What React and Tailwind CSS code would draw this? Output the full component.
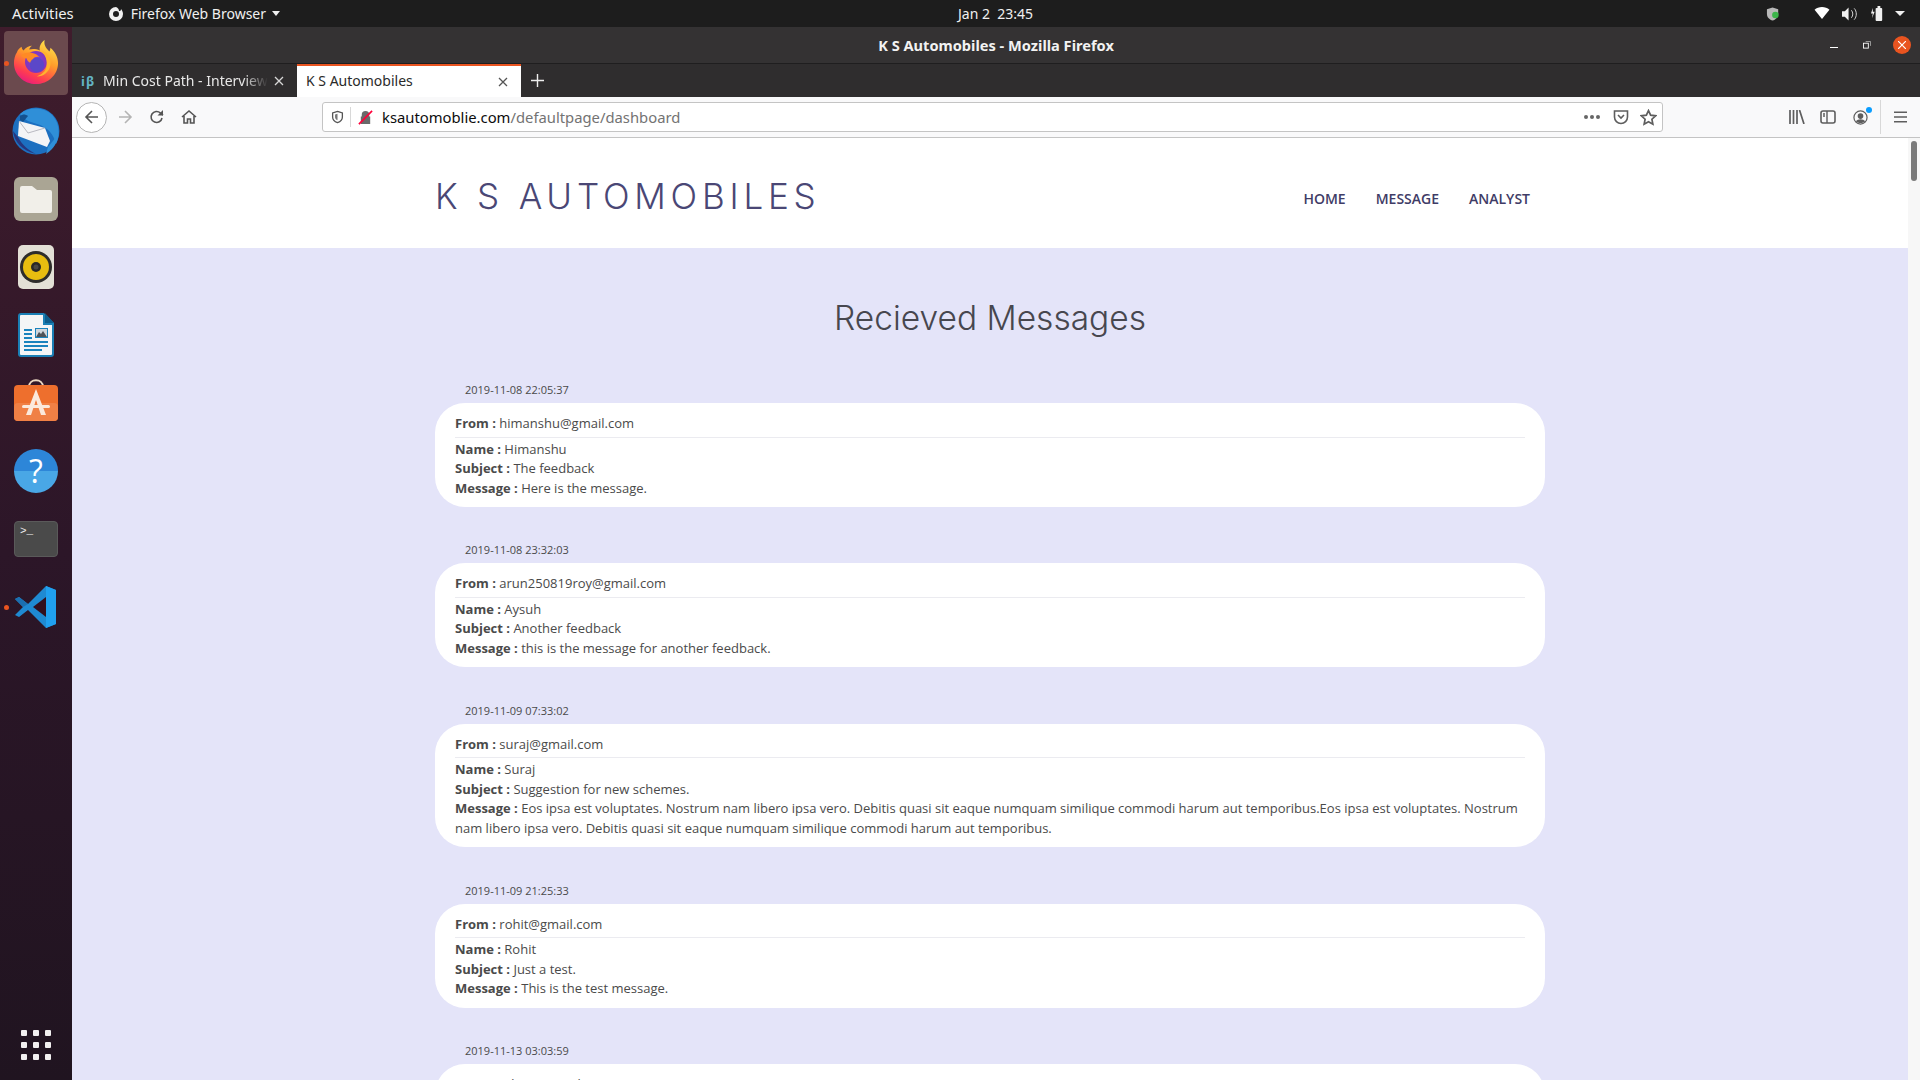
import React from "react";

const messages = [
  {
    date: "2019-11-08 22:05:37",
    from: "himanshu@gmail.com",
    name: "Himanshu",
    subject: "The feedback",
    message: "Here is the message.",
  },
  {
    date: "2019-11-08 23:32:03",
    from: "arun250819roy@gmail.com",
    name: "Aysuh",
    subject: "Another feedback",
    message: "this is the message for another feedback.",
  },
  {
    date: "2019-11-09 07:33:02",
    from: "suraj@gmail.com",
    name: "Suraj",
    subject: "Suggestion for new schemes.",
    message:
      "Eos ipsa est voluptates. Nostrum nam libero ipsa vero. Debitis quasi sit eaque numquam similique commodi harum aut temporibus.Eos ipsa est voluptates. Nostrum nam libero ipsa vero. Debitis quasi sit eaque numquam similique commodi harum aut temporibus.",
  },
  {
    date: "2019-11-09 21:25:33",
    from: "rohit@gmail.com",
    name: "Rohit",
    subject: "Just a test.",
    message: "This is the test message.",
  },
  {
    date: "2019-11-13 03:03:59",
    from: "aditya@gmail.com",
    name: "Aditya",
    subject: "",
    message: "",
  },
];

const FirefoxIcon = () => (
  <svg viewBox="0 0 48 48" className="w-[46px] h-[46px] -mt-[3px]">
    <defs>
      <linearGradient id="ffA" x1="0.7" y1="0" x2="0.2" y2="1">
        <stop offset="0" stopColor="#ffe14a" />
        <stop offset="0.4" stopColor="#ff9a2a" />
        <stop offset="0.75" stopColor="#ff3d50" />
        <stop offset="1" stopColor="#e31587" />
      </linearGradient>
      <radialGradient id="ffB" cx="0.5" cy="0.45" r="0.6">
        <stop offset="0" stopColor="#6e4ad6" />
        <stop offset="1" stopColor="#8a2fb8" />
      </radialGradient>
    </defs>
    <path
      d="M33 1c-1 5 1 8 5 12 1-2 1-3 1-4 5 4 8 10 8 16 0 12-10 22-23 22S1 37 1 25c0-4 1-8 3-11 1-3 3-5 5-6 0 2 1 3 2 4 2-3 6-5 9-5-2 1-3 3-3 4 3-1 7-1 11 1-1-4 1-8 5-11z"
      fill="url(#ffA)"
    />
    <circle cx="24" cy="24" r="11.5" fill="url(#ffB)" />
    <path d="M8 17c4-3 9-4 14-2 3 1 5 3 6 4-3-1-6 0-7 2-1 3 1 4 3 5-5 0-9-2-10-6-2 0-4-1-6-3z" fill="#ff8a25" />
    <path d="M30 12c6 2 10 8 9 15-1 7-7 12-14 12 5-2 9-5 10-10 1-6-1-12-5-17z" fill="#ffb32e" />
    <circle cx="25" cy="27" r="7.5" fill="#5b47c9" />
  </svg>
);

const ThunderbirdIcon = () => (
  <svg viewBox="0 0 48 48" className="w-[48px] h-[48px]">
    <circle cx="24" cy="24" r="23.500" fill="#1c6fc0" />
    <path d="M8 7c8-7 24-8 33 2 7 8 7 20 3 28-2-9-8-17-19-20-6-2-12-3-17-10z" fill="#2f8fd8" />
    <path d="M8 9c3-2 5-2 8 0l-5 6-3-2z" fill="#14518f" />
    <path d="M7 14 33 21l5 13-3 6-29-11z" fill="#f4f4f6" />
    <path d="M7 14 16 26 33 21" fill="none" stroke="#a9a9b4" strokeWidth="0.8" />
    <path d="M1 24c1 10 9 20 23 23-8-4-14-9-18-17z" fill="#27367e" />
    <path d="M36 40l9-11c0 6-2 12-11 18z" fill="#2f8fd8" />
  </svg>
);

const FilesIcon = () => (
  <div className="w-[44px] h-[44px] rounded-[6px] bg-[#aaa594] flex items-center justify-center">
    <svg viewBox="0 0 32 28" className="w-[32px] h-[28px]">
      <path d="M0 3a2 2 0 0 1 2-2h10l5 4h13a2 2 0 0 1 2 2v19a2 2 0 0 1-2 2H2a2 2 0 0 1-2-2z" fill="#f1efe9" />
    </svg>
  </div>
);

const RhythmboxIcon = () => (
  <div className="w-[36px] h-[44px] rounded-[5px] bg-[#e3e0d6] flex items-center justify-center -mt-[1px]">
    <svg viewBox="0 0 32 32" className="w-[32px] h-[32px]">
      <circle cx="16" cy="16" r="16" fill="#2e2d2b" />
      <circle cx="16" cy="16" r="13" fill="#e8bd10" />
      <circle cx="16" cy="16" r="5" fill="#2a2926" />
      <circle cx="16" cy="16" r="2.500" fill="#4a4844" />
    </svg>
  </div>
);

const WriterIcon = () => (
  <svg viewBox="0 0 36 44" className="w-[36px] h-[44px]">
    <path d="M3 0h23l10 10v31a3 3 0 0 1-3 3H3a3 3 0 0 1-3-3V3a3 3 0 0 1 3-3z" fill="#1a7fb5" />
    <path d="M3 2h22v10h9v29a1 1 0 0 1-1 1H3a1 1 0 0 1-1-1V3a1 1 0 0 1 1-1z" fill="#f4f5f6" />
    <path d="M27 0l9 10h-9z" fill="#0e5d8c" />
    <path d="M6 16h8v2H6zM6 20h8v2H6zM6 24h8v2H6zM6 28h24v2H6zM6 32h24v2H6zM6 36h18v2H6z" fill="#1a83bd" />
    <rect x="17" y="15" width="13" height="10" fill="#1a83bd" />
    <rect x="18" y="16" width="11" height="8" fill="#cfd6dc" />
    <path d="M18 24l3-5 2 2 2-3 4 6z" fill="#4f5358" />
  </svg>
);

const SoftwareIcon = () => (
  <svg viewBox="0 0 44 44" className="w-[44px] h-[44px] -mt-[4px]">
    <path d="M15 8c0-9 14-9 14 0" fill="none" stroke="#ecd9c3" strokeWidth="2" />
    <rect x="0" y="6" width="44" height="36" rx="4" fill="#ee6f2d" />
    <rect x="0" y="24" width="44" height="18" rx="4" fill="#f08045" />
    <path d="M22 10 12 36h5l5-15 5 15h5z" fill="#fbe9dc" />
    <rect x="8" y="26" width="28" height="3" rx="1.500" fill="#fbe9dc" />
  </svg>
);

const HelpIcon = () => (
  <div className="w-[44px] h-[44px] rounded-full bg-[linear-gradient(#2d86d8_50%,#49a7e6_50%)] flex items-center justify-center text-white text-[32px] leading-none font-['Open_Sans',sans-serif]">
    ?
  </div>
);

const TerminalIcon = () => (
  <div className="w-[44px] h-[36px] rounded-[4px] bg-[#4a4a4a] border border-[#5a5a5a] pl-[5px] pt-[2px] text-[#eee] text-[11px] leading-[14px] font-['Liberation_Mono',monospace]">
    &gt;_
  </div>
);

const VSCodeIcon = () => (
  <svg viewBox="0 0 44 44" className="w-[44px] h-[44px]">
    <path d="M32 1 14 19 5 12 1 14l8 8-8 8 4 2 9-7 18 18 10-4V5z" fill="#1f8ad2" />
    <path d="M32 1l10 4v34l-10 4V1z" fill="#20a0ef" />
    <path d="M32 12 19 22l13 10z" fill="#32101f" />
    <path d="M5 12 1 14l8 8 5-3z" fill="#1b6fb0" />
  </svg>
);

const DockItem = ({ active, running, children }) => (
  <div className="relative w-[72px] h-[68px] flex items-center justify-center shrink-0">
    {active && <div className="absolute left-[4px] top-[2px] w-[64px] h-[64px] rounded-[4px] bg-[#6b4a4e]" />}
    {running && <div className="absolute left-[4px] top-[32px] w-[5px] h-[5px] rounded-full bg-[#e95420]" />}
    <div className="relative">{children}</div>
  </div>
);

const Dock = () => (
  <div className="w-[72px] shrink-0 pt-[2px] bg-[linear-gradient(#3f1c2c,#2c1628_50%,#201420)] flex flex-col">
    <DockItem active running>
      <FirefoxIcon />
    </DockItem>
    <DockItem>
      <ThunderbirdIcon />
    </DockItem>
    <DockItem>
      <FilesIcon />
    </DockItem>
    <DockItem>
      <RhythmboxIcon />
    </DockItem>
    <DockItem>
      <WriterIcon />
    </DockItem>
    <DockItem>
      <SoftwareIcon />
    </DockItem>
    <DockItem>
      <HelpIcon />
    </DockItem>
    <DockItem>
      <TerminalIcon />
    </DockItem>
    <DockItem running>
      <VSCodeIcon />
    </DockItem>
    <div className="mt-auto mb-[20px] mx-auto grid grid-cols-3 gap-[6px]">
      {Array.from({ length: 9 }).map((_, i) => (
        <div key={i} className="w-[6px] h-[6px] rounded-[1px] bg-[#f2f0f0]" />
      ))}
    </div>
  </div>
);

const TopBar = () => (
  <div className="h-[27px] shrink-0 bg-[#1d1d1d] text-[#f0f0f0] text-[14px] font-['Noto_Sans',sans-serif] flex items-center relative">
    <span className="ml-[12px] text-[14.800px]">Activities</span>
    <svg viewBox="0 0 16 16" className="w-[16px] h-[16px] ml-[34px]">
      <path d="M8 1a7 7 0 1 0 7 7c0-2-1-4-2-5 0 2-1 2-2 2 0-2-1-3-3-4zm0 4a3 3 0 1 1 0 6 3 3 0 0 1 0-6z" fill="#f0f0f0" />
    </svg>
    <span className="ml-[7px]">Firefox Web Browser</span>
    <div className="ml-[6px] w-0 h-0 border-x-[4.500px] border-x-transparent border-t-[5px] border-t-[#f0f0f0]" />
    <span className="absolute left-[958px] top-[3px]">Jan 2&nbsp;&nbsp;23:45</span>
    <div className="ml-auto flex items-center h-full">
      <svg viewBox="0 0 16 16" className="w-[15px] h-[16px] mr-[33px]">
        <path d="M7 1l6 2v5c0 4-3 6-6 7-3-1-6-3-6-7V3z" fill="#b8b8b8" />
        <circle cx="10" cy="9" r="3.500" fill="#3cb44a" />
      </svg>
      <svg viewBox="0 0 16 14" className="w-[16px] h-[13px] mr-[12px]">
        <path d="M0 3c4-4 12-4 16 0l-8 10z" fill="#fff" />
      </svg>
      <svg viewBox="0 0 16 14" className="w-[15px] h-[14px] mr-[13px]">
        <path d="M0 4h3l4-4v14l-4-4H0z" fill="#f0f0f0" />
        <path d="M10 3c2 2 2 6 0 8M13 1c3 3 3 9 0 12" fill="none" stroke="#ddd" />
      </svg>
      <svg viewBox="0 0 16 16" className="w-[15px] h-[15px] mr-[10px]">
        <path d="M3 2 1 8h2l-1 5 3-7H3zM7 2h1V0h3v2h1a1 1 0 0 1 1 1v12a1 1 0 0 1-1 1H7a1 1 0 0 1-1-1V3a1 1 0 0 1 1-1z" fill="#f0f0f0" />
      </svg>
      <div className="mr-[15px] w-0 h-0 border-x-[5px] border-x-transparent border-t-[5px] border-t-[#f0f0f0]" />
    </div>
  </div>
);

const TitleBar = () => (
  <div className="h-[37px] shrink-0 bg-[#343233] border-b border-[#1f1e1f] flex items-center relative text-[#f2f2f2]">
    <div className="flex-1 text-center text-[14.600px] font-bold font-['Noto_Sans',sans-serif] mt-[1px]">
      K S Automobiles - Mozilla Firefox
    </div>
    <div className="absolute right-[82px] top-[20px] w-[8px] h-[1px] bg-white" />
    <svg viewBox="0 0 9 9" className="absolute right-[49px] top-[14px] w-[8px] h-[8px]">
      <rect x="0.5" y="2.5" width="5.500" height="5.500" fill="none" stroke="#fff" />
      <path d="M3 0.5h5.500v5" fill="none" stroke="#aaa" />
    </svg>
    <div className="absolute right-[9px] top-[9px] w-[18px] h-[18px] rounded-full bg-[#e95420] flex items-center justify-center">
      <svg viewBox="0 0 8 8" className="w-[8px] h-[8px]">
        <path d="M0 0l8 8M8 0 0 8" stroke="#fff" strokeWidth="1.200" />
      </svg>
    </div>
  </div>
);

const CloseX = ({ color }) => (
  <svg viewBox="0 0 10 10" className="w-[10px] h-[10px] shrink-0">
    <path d="M1 1l8 8M9 1 1 9" stroke={color} strokeWidth="1.300" fill="none" />
  </svg>
);

const TabBar = () => (
  <div className="h-[33px] shrink-0 bg-[#2f2d2e] flex font-['Noto_Sans',sans-serif] text-[14px] leading-[20px]">
    <div className="w-[225px] flex items-center text-[#e8e8e8] pl-[9px] pr-[13px]">
      <span className="text-[#63b4c4] font-bold text-[13px] tracking-[1px] mr-[8px] shrink-0">iβ</span>
      <span className="flex-1 whitespace-nowrap overflow-hidden [mask-image:linear-gradient(to_right,black_85%,transparent)]">
        Min Cost Path - Interview Questions
      </span>
      <span className="ml-[6px]">
        <CloseX color="#d8d8d8" />
      </span>
    </div>
    <div className="w-[224px] bg-white border-t-2 border-[#e95420] flex items-center pl-[9px] pr-[13px] text-[#2a2a2a]">
      <span className="flex-1 -mt-[1px]">K S Automobiles</span>
      <CloseX color="#555" />
    </div>
    <svg viewBox="0 0 12 12" className="w-[13px] h-[13px] ml-[10px] self-center">
      <path d="M6 0v12M0 6h12" stroke="#eee" strokeWidth="1.300" />
    </svg>
  </div>
);

const NavBar = () => (
  <div className="h-[41px] shrink-0 bg-[#f9f9fa] border-b border-[#c4c4c4] flex items-center text-[#5b5b5f]">
    <div className="ml-[4px] w-[31px] h-[31px] rounded-full bg-white border border-[#b5b5b5] flex items-center justify-center">
      <svg viewBox="0 0 16 16" className="w-[16px] h-[16px]">
        <path d="M14 8H2M8 2 2 8l6 6" fill="none" stroke="#555" strokeWidth="1.600" />
      </svg>
    </div>
    <svg viewBox="0 0 16 16" className="w-[16px] h-[16px] ml-[10px]">
      <path d="M2 8h12M8 2l6 6-6 6" fill="none" stroke="#b4b4b4" strokeWidth="1.600" />
    </svg>
    <svg viewBox="0 0 16 16" className="w-[16px] h-[16px] ml-[16px]">
      <path d="M13 9a5.500 5.500 0 1 1-1.600-5L14 6" fill="none" stroke="#555" strokeWidth="1.600" />
      <path d="M14 1v5.500H8.500z" fill="#555" />
    </svg>
    <svg viewBox="0 0 16 16" className="w-[16px] h-[16px] ml-[16px]">
      <path d="M1 8l7-6 7 6M3 7v7h3.500v-4h3v4H13V7" fill="none" stroke="#555" strokeWidth="1.600" />
    </svg>
    <div className="ml-[125px] w-[1341px] h-[30px] bg-white border border-[#c4c4c4] rounded-[3px] flex items-center font-['Noto_Sans',sans-serif] text-[14.800px]">
      <svg viewBox="0 0 16 16" className="w-[13px] h-[14px] ml-[8px]">
        <path d="M8 1l6 2v5c0 4-3 6-6 7-3-1-6-3-6-7V3z" fill="none" stroke="#555" strokeWidth="1.600" />
        <path d="M8 4v8c-2-1-3-2-3-4V5z" fill="#777" />
      </svg>
      <div className="w-[1px] h-[20px] bg-[#d8d8d8] ml-[6px]" />
      <svg viewBox="0 0 16 16" className="w-[15px] h-[15px] ml-[7px]">
        <path d="M4 7V5a4 4 0 0 1 8 0v2h1v8H3V7z" fill="#6a6a6a" />
        <path d="M1 15 15 1" stroke="#ff0039" strokeWidth="1.800" />
      </svg>
      <span className="ml-[9px] text-[#0c0c0d]">ksautomoblie.com</span>
      <span className="text-[#737373]">/defaultpage/dashboard</span>
      <div className="ml-auto flex items-center">
        <div className="flex gap-[2px]">
          <div className="w-[4px] h-[4px] rounded-full bg-[#666]" />
          <div className="w-[4px] h-[4px] rounded-full bg-[#666]" />
          <div className="w-[4px] h-[4px] rounded-full bg-[#666]" />
        </div>
        <svg viewBox="0 0 16 16" className="w-[16px] h-[16px] ml-[13px]">
          <path d="M1.500 2h13v6a6.500 6.500 0 0 1-13 0z" fill="none" stroke="#5e5e5e" strokeWidth="1.600" />
          <path d="M5 6l3 3 3-3" fill="none" stroke="#5e5e5e" strokeWidth="1.600" />
        </svg>
        <svg viewBox="0 0 16 16" className="w-[17px] h-[17px] ml-[11px] mr-[5px]">
          <path d="M8 1.500l2 4.300 4.700.6-3.500 3.200.9 4.700L8 12l-4.100 2.300.9-4.700L1.300 6.400 6 5.800z" fill="none" stroke="#5e5e5e" strokeWidth="1.600" />
        </svg>
      </div>
    </div>
    <div className="ml-auto flex items-center h-full">
      <svg viewBox="0 0 16 14" className="w-[16px] h-[14px]">
        <path d="M1 0v14M4.500 0v14M8 0v14M10.500 0l4.500 14" stroke="#5e5e5e" strokeWidth="1.700" fill="none" />
      </svg>
      <svg viewBox="0 0 16 14" className="w-[16px] h-[14px] ml-[15px]">
        <rect x="1" y="1" width="14" height="12" rx="2" fill="none" stroke="#5e5e5e" strokeWidth="1.600" />
        <path d="M7 1v12M3 4h2M3 6h2" stroke="#5e5e5e" strokeWidth="1.400" />
      </svg>
      <div className="relative ml-[17px]">
        <svg viewBox="0 0 16 16" className="w-[15px] h-[15px]">
          <circle cx="8" cy="8" r="7" fill="none" stroke="#5e5e5e" strokeWidth="1.300" />
          <circle cx="8" cy="6.500" r="3" fill="#5e5e5e" />
          <path d="M3 12c2-3 8-3 10 0-2 2.500-8 2.500-10 0z" fill="#5e5e5e" />
        </svg>
        <div className="absolute -right-[4px] -top-[3px] w-[6px] h-[6px] rounded-full bg-[#0a9dff]" />
      </div>
      <div className="w-[1px] h-[34px] bg-[#d8d8d8] ml-[12px]" />
      <svg viewBox="0 0 14 12" className="w-[13px] h-[12px] ml-[13px] mr-[13px]">
        <path d="M0 1h14M0 6h14M0 11h14" stroke="#5e5e5e" strokeWidth="1.600" />
      </svg>
    </div>
  </div>
);

const MessageCard = ({ item }) => (
  <div className="mb-[35.400px]">
    <div className="pl-[30px] h-[16px] text-[11px] leading-[16px] text-[#4a4a4a]">{item.date}</div>
    <div className="mt-[5px] bg-white rounded-[30px] px-[20px] pt-[11px] pb-[9px] text-[13px] leading-[19.500px] text-[#4a4a4a]">
      <div className="pb-[3px] border-b border-[#ebebf0]">
        <b>From :</b> {item.from}
      </div>
      <div className="pt-[2px]">
        <b>Name :</b> {item.name}
      </div>
      <div>
        <b>Subject :</b> {item.subject}
      </div>
      <div>
        <b>Message :</b> {item.message}
      </div>
    </div>
  </div>
);

const Website = () => (
  <div className="flex-1 min-w-0 h-full overflow-hidden bg-[#e4e4f9] font-['Open_Sans',sans-serif]">
    <div className="h-[110px] bg-white">
      <div className="w-[1110px] mx-auto h-full flex items-center">
        <div className="text-[35px] font-['Inter',sans-serif] font-light tracking-[4.800px] text-[#4a4775] mt-[6px]">
          K S AUTOMOBILES
        </div>
        <div className="ml-auto mr-[15px] flex gap-[30px] text-[14px] font-semibold text-[#3f3c66] mt-[10px]">
          <span>HOME</span>
          <span>MESSAGE</span>
          <span>ANALYST</span>
        </div>
      </div>
    </div>
    <div className="w-[1110px] mx-auto pt-[48px]">
      <h1 className="text-center text-[33.500px] leading-[44px] font-light font-['Inter',sans-serif] text-[#47474f] mb-[42px]">
        Recieved Messages
      </h1>
      {messages.map((item) => (
        <MessageCard key={item.date} item={item} />
      ))}
    </div>
  </div>
);

const Scrollbar = () => (
  <div className="w-[12px] shrink-0 bg-[#f7f7f7] pt-[3px]">
    <div className="mx-auto w-[6px] h-[40px] rounded-full bg-[#7a7a7a]" />
  </div>
);

export default function App() {
  return (
    <div className="w-[1920px] h-[1080px] overflow-hidden flex flex-col">
      <TopBar />
      <div className="flex-1 min-h-0 flex">
        <Dock />
        <div className="flex-1 min-w-0 flex flex-col">
          <TitleBar />
          <TabBar />
          <NavBar />
          <div className="flex-1 min-h-0 flex">
            <Website />
            <Scrollbar />
          </div>
        </div>
      </div>
    </div>
  );
}
